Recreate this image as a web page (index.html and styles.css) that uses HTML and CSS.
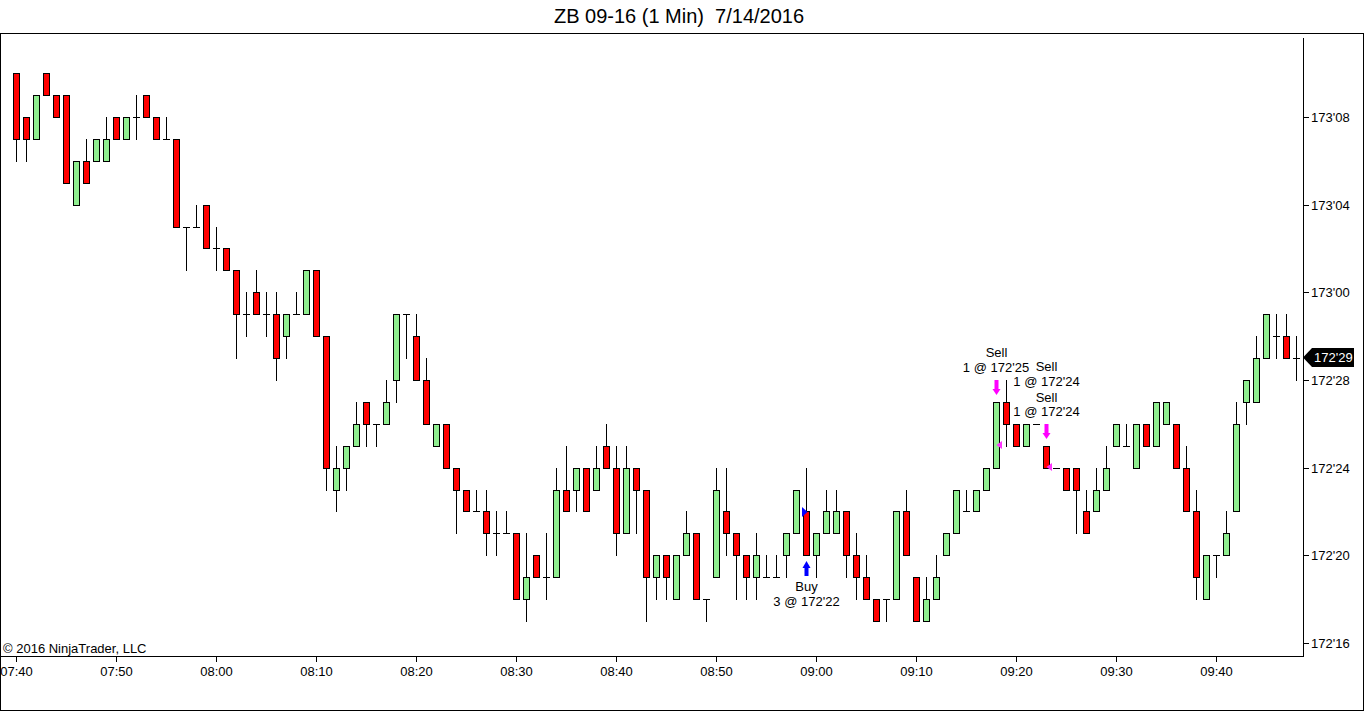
FILE: index.html
```html
<!DOCTYPE html>
<html lang="en">
<head>
<meta charset="utf-8">
<title>ZB 09-16 (1 Min) 7/14/2016</title>
<link rel="stylesheet" href="styles.css">
</head>
<body>
<div class="title">ZB 09-16 (1 Min)  7/14/2016</div>
<div class="frame">
<svg class="chart" id="chart" width="1362" height="676" viewBox="1 34 1362 676" xmlns="http://www.w3.org/2000/svg">
  <g id="candles"></g>

  <!-- execution markers -->
  <polygon class="buy" points="802,507 807.5,512 802,517"/>
  <polygon class="exit" points="1002,441 996.5,445 1002,449"/>
  <polygon class="exit" points="1052,463 1046.5,467 1052,471"/>

  <!-- buy annotation -->
  <polygon class="buy" points="806.5,561 802.5,568 810.5,568"/>
  <rect class="buy" x="804.5" y="567" width="4" height="9"/>
  <text class="lbl mid" x="806.5" y="591">Buy</text>
  <text class="lbl mid" x="806.5" y="606">3 @ 172'22</text>

  <!-- sell annotations -->
  <rect class="sell" x="994.5" y="380" width="4" height="10"/>
  <polygon class="sell" points="992.5,389 1000.5,389 996.5,395"/>
  <rect class="sell" x="1044.5" y="424" width="4" height="10"/>
  <polygon class="sell" points="1042.5,433 1050.5,433 1046.5,439"/>
  <text class="lbl mid" x="996.5" y="357">Sell</text>
  <text class="lbl mid" x="996" y="371.5">1 @ 172'25</text>
  <text class="lbl mid" x="1046.5" y="370.5">Sell</text>
  <text class="lbl mid" x="1046.5" y="386">1 @ 172'24</text>
  <text class="lbl mid" x="1046.5" y="401.5">Sell</text>
  <text class="lbl mid" x="1046.5" y="416">1 @ 172'24</text>

  <!-- axes -->
  <line class="axis" x1="1303.5" y1="38" x2="1303.5" y2="657"/>
  <line class="axis" x1="0" y1="656.5" x2="1304" y2="656.5"/>

  <g class="yaxis">
    <line class="axis" x1="1304" y1="117.5" x2="1309" y2="117.5"/><text class="lbl" x="1311" y="122">173'08</text>
    <line class="axis" x1="1304" y1="205.5" x2="1309" y2="205.5"/><text class="lbl" x="1311" y="210">173'04</text>
    <line class="axis" x1="1304" y1="292.5" x2="1309" y2="292.5"/><text class="lbl" x="1311" y="297">173'00</text>
    <line class="axis" x1="1304" y1="380.5" x2="1309" y2="380.5"/><text class="lbl" x="1311" y="385">172'28</text>
    <line class="axis" x1="1304" y1="468.5" x2="1309" y2="468.5"/><text class="lbl" x="1311" y="473">172'24</text>
    <line class="axis" x1="1304" y1="555.5" x2="1309" y2="555.5"/><text class="lbl" x="1311" y="560">172'20</text>
    <line class="axis" x1="1304" y1="643.5" x2="1309" y2="643.5"/><text class="lbl" x="1311" y="648">172'16</text>
  </g>

  <g class="price-marker">
    <polygon class="marker" points="1303,357.5 1312,348 1354,348 1354,367 1312,367"/>
    <text class="lbl marker-text" x="1314" y="362">172'29</text>
  </g>

  <g class="xaxis">
    <line class="axis" x1="16.5" y1="657" x2="16.5" y2="662"/><text class="lbl mid" x="16.5" y="676">07:40</text>
    <line class="axis" x1="116.5" y1="657" x2="116.5" y2="662"/><text class="lbl mid" x="116.5" y="676">07:50</text>
    <line class="axis" x1="216.5" y1="657" x2="216.5" y2="662"/><text class="lbl mid" x="216.5" y="676">08:00</text>
    <line class="axis" x1="316.5" y1="657" x2="316.5" y2="662"/><text class="lbl mid" x="316.5" y="676">08:10</text>
    <line class="axis" x1="416.5" y1="657" x2="416.5" y2="662"/><text class="lbl mid" x="416.5" y="676">08:20</text>
    <line class="axis" x1="516.5" y1="657" x2="516.5" y2="662"/><text class="lbl mid" x="516.5" y="676">08:30</text>
    <line class="axis" x1="616.5" y1="657" x2="616.5" y2="662"/><text class="lbl mid" x="616.5" y="676">08:40</text>
    <line class="axis" x1="716.5" y1="657" x2="716.5" y2="662"/><text class="lbl mid" x="716.5" y="676">08:50</text>
    <line class="axis" x1="816.5" y1="657" x2="816.5" y2="662"/><text class="lbl mid" x="816.5" y="676">09:00</text>
    <line class="axis" x1="916.5" y1="657" x2="916.5" y2="662"/><text class="lbl mid" x="916.5" y="676">09:10</text>
    <line class="axis" x1="1016.5" y1="657" x2="1016.5" y2="662"/><text class="lbl mid" x="1016.5" y="676">09:20</text>
    <line class="axis" x1="1116.5" y1="657" x2="1116.5" y2="662"/><text class="lbl mid" x="1116.5" y="676">09:30</text>
    <line class="axis" x1="1216.5" y1="657" x2="1216.5" y2="662"/><text class="lbl mid" x="1216.5" y="676">09:40</text>
  </g>

  <text class="lbl" x="3" y="653">© 2016 NinjaTrader, LLC</text>
</svg>
</div>
<script src="script.js"></script>
</body>
</html>
```

FILE: styles.css
```css
html, body {
  margin: 0;
  padding: 0;
  background: #ffffff;
}

.title {
  height: 33px;
  line-height: 33px;
  padding-right: 8px;
  text-align: center;
  white-space: pre;
  font-family: "Liberation Sans", Arial, sans-serif;
  font-size: 20px;
  color: #000000;
}

.frame {
  width: 1364px;
  height: 678px;
  box-sizing: border-box;
  border: 1px solid #000000;
}

.chart {
  display: block;
}

.axis {
  stroke: #000000;
  stroke-width: 1;
  shape-rendering: crispEdges;
}

.lbl {
  font-family: "Liberation Sans", Arial, sans-serif;
  font-size: 13px;
  fill: #000000;
}

.mid {
  text-anchor: middle;
}

.wick,
.doji {
  stroke: #000000;
  stroke-width: 1;
  shape-rendering: crispEdges;
}

.up {
  fill: #90ee90;
  stroke: #000000;
  stroke-width: 1;
  shape-rendering: crispEdges;
}

.dn {
  fill: #ff0000;
  stroke: #000000;
  stroke-width: 1;
  shape-rendering: crispEdges;
}

.buy {
  fill: #0000ff;
}

.sell {
  fill: #ff00ff;
}

.exit {
  fill: #ff33ff;
}

.marker {
  fill: #000000;
}

.marker-text {
  fill: #ffffff;
}
```

FILE: script.js
```javascript
(function () {
  var data = [
    [26,26,22,23],[24,24,22,23],[23,25,23,25],[26,26,25,25],[25,25,24,24],[25,25,21,21],[20,22,20,22],[22,23,21,21],[22,23,22,23],[22,24,22,23],
    [24,24,23,23],[23,24,23,24],[24,25,23,24],[25,25,24,24],[24,24,23,23],[23,24,23,23],[23,23,19,19],[19,19,17,19],[19,20,19,19],[20,20,18,18],
    [18,19,17,18],[18,18,17,17],[17,17,13,15],[15,16,14,15],[16,17,15,15],[15,16,14,15],[15,16,12,13],[14,15,13,15],[15,16,15,15],[15,17,15,17],
    [17,17,14,14],[14,14,7,8],[7,9,6,8],[8,9,7,9],[9,11,9,10],[11,11,9,10],[10,10,9,10],[10,12,10,11],[12,15,11,15],[15,15,13,15],
    [14,15,12,12],[12,13,10,10],[9,10,9,10],[10,10,8,8],[8,8,5,7],[7,7,6,6],[6,7,6,6],[6,7,4,5],[5,6,4,5],[5,6,5,5],
    [5,5,2,2],[2,5,1,3],[4,4,3,3],[3,5,2,3],[3,8,3,7],[7,9,6,6],[7,8,6,8],[8,8,6,6],[7,9,7,8],[9,10,8,8],
    [8,9,4,5],[5,9,5,8],[8,8,5,7],[7,7,1,3],[3,4,2,4],[4,4,2,3],[2,4,2,4],[4,6,4,5],[5,5,2,2],[2,2,1,2],
    [3,8,3,7],[6,8,4,5],[5,5,2,4],[4,4,2,3],[3,5,2,4],[3,4,3,3],[3,4,3,3],[4,5,3,5],[5,7,5,7],[6,8,4,4],
    [4,5,3,5],[5,7,5,6],[5,7,5,6],[6,6,3,4],[4,5,2,3],[3,4,2,2],[2,2,1,1],[2,2,1,2],[2,6,2,6],[6,7,4,4],
    [3,3,1,1],[1,3,1,2],[2,4,2,3],[4,5,4,5],[5,7,5,7],[6,7,6,6],[6,7,6,7],[7,8,7,8],[8,11,8,11],[11,12,9,10],
    [10,10,9,9],[9,10,9,10],[10,10,10,10],[9,9,8,8],[8,8,8,8],[8,8,7,7],[8,8,5,7],[6,7,5,5],[6,8,6,7],[7,9,7,8],
    [9,10,9,10],[9,10,9,9],[8,10,8,10],[10,10,9,9],[9,11,9,11],[10,11,10,11],[10,10,8,8],[8,9,6,6],[6,7,2,3],[2,4,2,4],
    [4,4,3,4],[4,6,4,5],[6,11,6,10],[11,12,10,12],[11,14,11,13],[13,15,13,15],[14,15,13,14],[14,15,13,13],[13,14,12,13]
  ];
  var NS = "http://www.w3.org/2000/svg";
  var g = document.getElementById("candles");
  function py(v) { return Math.round(643 - 21.92 * v); }
  function el(name, attrs, cls) {
    var e = document.createElementNS(NS, name);
    for (var k in attrs) e.setAttribute(k, attrs[k]);
    e.setAttribute("class", cls);
    g.appendChild(e);
  }
  data.forEach(function (d, m) {
    var o = d[0], h = d[1], l = d[2], c = d[3];
    var cx = 16 + 10 * m;
    if (h !== l) {
      el("line", { x1: cx + 0.5, x2: cx + 0.5, y1: py(h), y2: py(l) + 1 }, "wick");
    }
    if (o === c) {
      var y = py(o) + 0.5;
      el("line", { x1: cx - 3, x2: cx + 4, y1: y, y2: y }, "doji");
    } else {
      var top = py(Math.max(o, c)), bot = py(Math.min(o, c));
      el("rect", { x: cx - 2.5, y: top + 0.5, width: 6, height: bot - top }, c > o ? "up" : "dn");
    }
  });
})();
```
